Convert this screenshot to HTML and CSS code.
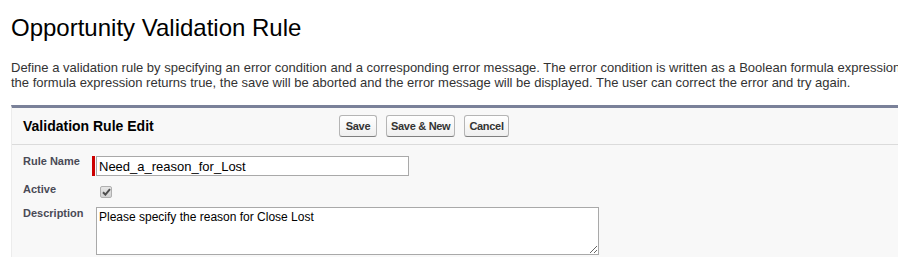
FILE: index.html
```html
<!DOCTYPE html>
<html lang="en">

<head>
  <meta charset="UTF-8">
  <meta name="viewport" content="width=device-width, initial-scale=1.0">
  <title>Opportunity Validation Rule</title>
  <link rel="stylesheet" href="styles.css">
</head>

<body>
  <div class="page">
    <h1 class="page-title">Opportunity Validation Rule</h1>
    <p class="intro">
      <span>Define a validation rule by specifying an error condition and a corresponding error message. The error condition is written as a Boolean formula expression that returns true or false. When</span><br>
      <span>the formula expression returns true, the save will be aborted and the error message will be displayed. The user can correct the error and try again.</span>
    </p>

    <div class="page-block">
      <div class="pb-header">
        <h2 class="pb-title">Validation Rule Edit</h2>
        <div class="pb-buttons">
          <button class="btn btn-save">Save</button>
          <button class="btn">Save &amp; New</button>
          <button class="btn">Cancel</button>
        </div>
      </div>
      <div class="pb-body">
        <div class="row row-name">
          <label class="label" for="rule-name">Rule Name</label>
          <div class="field required">
            <input type="text" id="rule-name" value="Need_a_reason_for_Lost">
          </div>
        </div>
        <div class="row row-active">
          <span class="label">Active</span>
          <div class="field">
            <span class="checkbox">
              <svg width="9" height="8" viewBox="0 0 9 8">
                <path d="M1 4.2 L3.4 6.6 L8 1.2" fill="none" stroke="#4d4d4d" stroke-width="2" />
              </svg>
            </span>
          </div>
        </div>
        <div class="row row-desc">
          <label class="label" for="description">Description</label>
          <div class="field">
            <textarea id="description">Please specify the reason for Close Lost</textarea>
          </div>
        </div>
      </div>
    </div>
  </div>
</body>

</html>
```

FILE: styles.css
```css
* {
  box-sizing: border-box;
  padding: 0;
  margin: 0;
}

html,
body {
  width: 100%;
  height: 100%;
  overflow: hidden;
}

body {
  font-family: "Liberation Sans", Arial, sans-serif;
  color: #222;
  background-color: #fff;
}

.page {
  width: 1200px;
  padding-left: 11px;
}

.page-title {
  margin-top: 14px;
  font-size: 24px;
  line-height: 28px;
  font-weight: normal;
  color: #000;
}

.intro {
  margin-top: 18px;
  font-size: 13px;
  line-height: 15px;
  color: #333;
}

.intro span {
  white-space: nowrap;
}

/* page block */
.page-block {
  margin-top: 15px;
  border-top: 3px solid #7a8199;
  border-left: 1px solid #ececec;
  background-color: #f8f8f8;
  height: 200px;
}

.pb-header {
  display: flex;
  align-items: center;
  height: 37px;
  padding-left: 11px;
  border-bottom: 1px solid #dbdbdb;
}

.pb-title {
  width: 316px;
  font-size: 14px;
  font-weight: bold;
  color: #000;
}

.pb-buttons {
  display: flex;
  gap: 9px;
}

.btn {
  height: 22px;
  padding: 0 4px;
  font-family: "Liberation Sans", Arial, sans-serif;
  font-size: 11px;
  font-weight: bold;
  letter-spacing: -0.3px;
  color: #333;
  background: linear-gradient(#ffffff, #efefef);
  border: 1px solid #b5b5b5;
  border-bottom-color: #7f7f7f;
  border-radius: 3px;
}

.btn-save {
  min-width: 38px;
}

.pb-body {
  padding: 9px 0 0 11px;
}

.row {
  display: flex;
  align-items: flex-start;
}

.label {
  width: 73px;
  font-size: 11px;
  line-height: 14px;
  font-weight: bold;
  color: #4a4a56;
}

.row-active {
  margin-top: 6px;
}

.row-desc {
  margin-top: 8px;
}

.field {
  display: flex;
}

.row-name .field {
  margin-top: 2px;
}

.required {
  gap: 1px;
  margin-left: -4px;
}

.required::before {
  content: "";
  width: 3px;
  background-color: #c00;
}

input[type="text"] {
  width: 313px;
  height: 20px;
  padding: 0 2px;
  border: 1px solid #a9a9a9;
  font-family: "Liberation Sans", Arial, sans-serif;
  font-size: 13px;
  color: #000;
  background-color: #fff;
}

.checkbox {
  display: flex;
  align-items: center;
  justify-content: center;
  width: 12px;
  height: 12px;
  margin: 4px 0 0 4px;
  border: 1px solid #b0b0b0;
  border-radius: 2px;
  background: linear-gradient(#e6e6e6, #d2d2d2);
}

textarea {
  display: block;
  width: 503px;
  height: 48px;
  margin-top: 1px;
  padding: 2px;
  border: 1px solid #a9a9a9;
  font-family: "Liberation Sans", Arial, sans-serif;
  font-size: 12px;
  color: #000;
  background-color: #fff;
}
```
